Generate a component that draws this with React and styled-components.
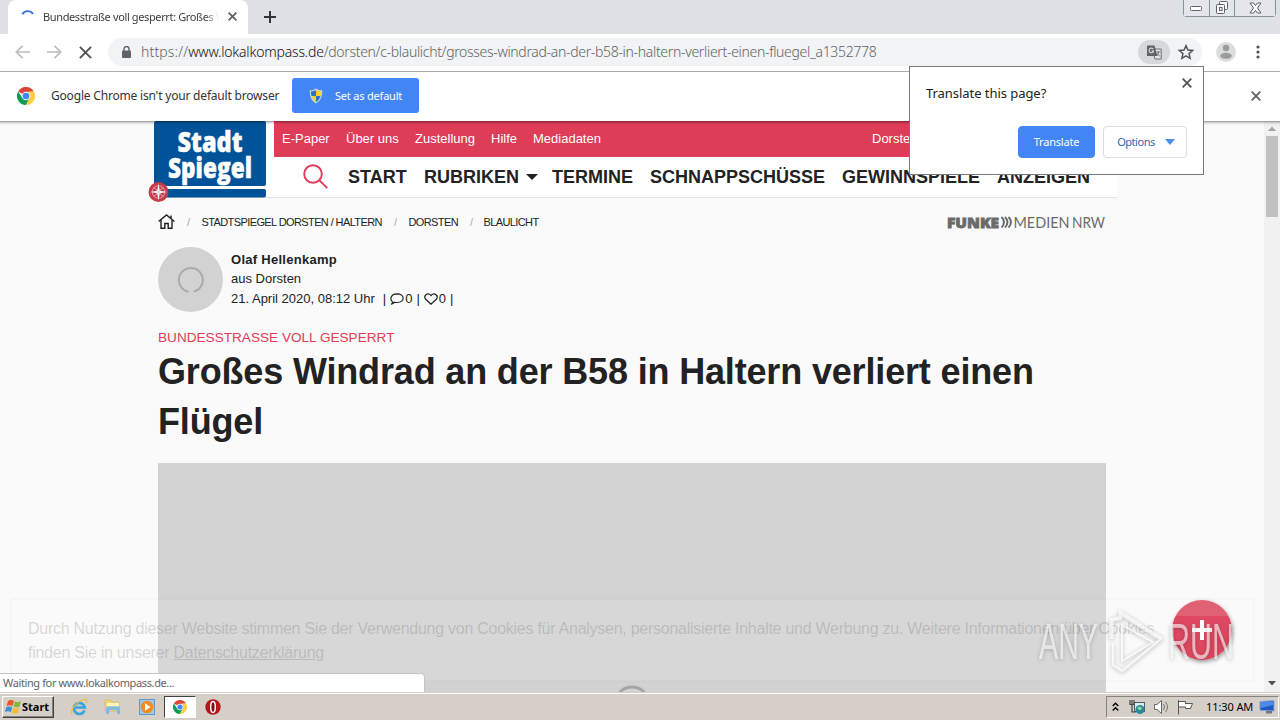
//React Imports
import React from 'react';

//library/framework imports
import styled, { createGlobalStyle } from 'styled-components';

const subLinks = [
  { text: 'E-Paper', width: 64 },
  { text: 'Über uns', width: 69 },
  { text: 'Zustellung', width: 76 },
  { text: 'Hilfe', width: 42 },
  { text: 'Mediadaten', width: 339 },
  { text: 'Dorsten', width: 60 },
];

const mainLinks = [
  { text: 'START', width: 76 },
  { text: 'RUBRIKEN', width: 128, caret: true },
  { text: 'TERMINE', width: 98 },
  { text: 'SCHNAPPSCHÜSSE', width: 192 },
  { text: 'GEWINNSPIELE', width: 155 },
  { text: 'ANZEIGEN', width: 100 },
];

const CloseIcon = ({ size = 10, color = '#5f6368', stroke = 1.8 }) => (
  <svg width={size} height={size} viewBox="0 0 10 10" stroke={color} strokeWidth={stroke} fill="none">
    <path d="M.7.7l8.6 8.6M9.3.7L.7 9.3" />
  </svg>
);

const ChromeIcon = ({ size = 18 }) => (
  <svg width={size} height={size} viewBox="0 0 18 18">
    <path d="M9 9L1.2 4.5A9 9 0 0 1 16.8 4.5L9 5z" fill="#db4437" />
    <path d="M1.2 4.5A9 9 0 0 0 9 18l3.6-6.9L9 9 5.4 11z" fill="#0f9d58" />
    <path d="M16.8 4.5A9 9 0 0 1 9 18l3.6-7L9 5z" fill="#ffcd40" />
    <circle cx="9" cy="9" r="4.2" fill="#f5f5f5" />
    <circle cx="9" cy="9" r="3.3" fill="#4285f4" />
  </svg>
);

const ShieldIcon = () => (
  <svg width="14" height="16" viewBox="0 0 14 16">
    <path d="M7 .5c2 1.4 4 1.8 6.3 1.8 0 6-1.3 10.5-6.3 13.2C2 12.8.7 8.3.7 2.3 3 2.3 5 1.9 7 .5z" fill="#c9d4dc" />
    <path d="M7 2C5.5 3 4 3.4 2 3.5c0 1.5.1 3 .5 4.5H7z" fill="#2f6fc4" />
    <path d="M7 2c1.5 1 3 1.4 5 1.5 0 1.5-.1 3-.5 4.5H7z" fill="#f7d02c" />
    <path d="M2.5 8c.7 2.6 2.2 4.7 4.5 6V8z" fill="#f7d02c" />
    <path d="M11.5 8c-.7 2.6-2.2 4.7-4.5 6V8z" fill="#2f6fc4" />
  </svg>
);

const TabStrip = () => (
  <Strip>
    <Tab>
      <svg width="14" height="14" viewBox="0 0 14 14" fill="none">
        <path d="M1.3 4.2A6.3 6.3 0 0 1 12 4" stroke="#3b6fe0" strokeWidth="1.9" />
      </svg>
      <TabTitle>Bundesstraße voll gesperrt: Großes W</TabTitle>
      <CloseIcon size={9} stroke={2} />
    </Tab>
    <NewTab>
      <svg width="12" height="12" viewBox="0 0 12 12" stroke="#303338" strokeWidth="2">
        <path d="M6 0v12M0 6h12" />
      </svg>
    </NewTab>
    <WindowButtons>
      <WindowButton $width={25}>
        <svg width="13" height="6" viewBox="0 0 13 6">
          <rect x=".5" y="1.5" width="11" height="4" rx="1" fill="#fff" stroke="#5d626b" />
        </svg>
      </WindowButton>
      <WindowButton $width={25}>
        <svg width="14" height="14" viewBox="0 0 14 14" fill="#f7f8fa" stroke="#5d626b">
          <rect x="4.5" y=".5" width="8" height="8" rx="1" />
          <rect x="1.5" y="3.5" width="8" height="9" rx="1" />
          <rect x="4.5" y="6.5" width="2.5" height="3" />
        </svg>
      </WindowButton>
      <WindowButton $width={41}>
        <svg width="13" height="12" viewBox="0 0 13 12" fill="#fff" stroke="#5d626b">
          <path d="M1 1h3.5l2 2.5 2-2.5H12L8.5 6l3.5 5H8.5l-2-2.5-2 2.5H1l3.5-5z" />
        </svg>
      </WindowButton>
    </WindowButtons>
  </Strip>
);

const Toolbar = () => (
  <Bar>
    <NavButtons>
      <svg width="15" height="14" viewBox="0 0 15 14" fill="none" stroke="#babcbe" strokeWidth="1.7">
        <path d="M15 7H1.5M7.5 .8L1.3 7l6.2 6.2" />
      </svg>
      <svg width="15" height="14" viewBox="0 0 15 14" fill="none" stroke="#babcbe" strokeWidth="1.7">
        <path d="M0 7h13.5M7.5 .8L13.7 7l-6.2 6.2" />
      </svg>
      <CloseIcon size={13} stroke={1.5} color="#505357" />
    </NavButtons>
    <Omnibox>
      <svg width="9" height="12" viewBox="0 0 9 12">
        <path d="M2 5V3a2.5 2.5 0 0 1 5 0v2" fill="none" stroke="#5f6368" strokeWidth="1.4" />
        <rect y="4.5" width="9" height="7.5" rx="1" fill="#5f6368" />
      </svg>
      <Url>
        <Scheme>https://</Scheme>
        <Host>www.lokalkompass.de</Host>
        /dorsten/c-blaulicht/grosses-windrad-an-der-b58-in-haltern-verliert-einen-fluegel_a1352778
      </Url>
      <TranslateChip>
        <svg width="15" height="15" viewBox="0 0 15 15">
          <path d="M5.5 4h8.700v10H8z" fill="#e6e6e6" stroke="#6b6e72" />
          <path d="M0 .5h7.5L10.5 11H0z" fill="#5f6368" />
          <path d="M6.3 4.2A2.3 2.3 0 1 0 6.6 6H4.5" fill="none" stroke="#ddd" strokeWidth="1.1" />
          <path d="M9.5 7h4M11.5 6v1c0 1.5-1 3-2 4M10.5 8.5l2.5 3" fill="none" stroke="#6b6e72" strokeWidth=".9" />
        </svg>
      </TranslateChip>
      <svg width="16" height="16" viewBox="0 0 24 24" fill="none" stroke="#505357" strokeWidth="2.2">
        <path d="M12 2.5l2.9 6.5 7.1.7-5.4 4.7 1.6 7L12 17.7l-6.2 3.7 1.6-7L2 9.7 9.1 9z" />
      </svg>
    </Omnibox>
    <Avatar>
      <svg width="20" height="20" viewBox="0 0 20 20">
        <circle cx="10" cy="10" r="10" fill="#dcdddd" />
        <circle cx="10" cy="6" r="3.2" fill="#999b9d" />
        <ellipse cx="10" cy="13.8" rx="5.8" ry="3" fill="#999b9d" />
      </svg>
    </Avatar>
    <svg width="4" height="14" viewBox="0 0 4 14" fill="#505357">
      <circle cx="2" cy="2" r="1.6" />
      <circle cx="2" cy="7" r="1.6" />
      <circle cx="2" cy="12" r="1.6" />
    </svg>
  </Bar>
);

const InfoBar = () => (
  <Info>
    <ChromeIcon />
    <InfoText>Google Chrome isn't your default browser</InfoText>
    <DefaultButton>
      <ShieldIcon />
      <span>Set as default</span>
    </DefaultButton>
    <InfoClose>
      <CloseIcon size={10} />
    </InfoClose>
  </Info>
);

const TranslatePopup = () => (
  <Popup>
    <PopupHead>
      <PopupTitle>Translate this page?</PopupTitle>
      <CloseIcon size={10} color="#505357" />
    </PopupHead>
    <PopupActions>
      <PopupButton $primary>Translate</PopupButton>
      <PopupButton>
        Options
        <svg width="10" height="6" viewBox="0 0 10 6">
          <path d="M0 0h10L5 6z" fill="#4a90e2" />
        </svg>
      </PopupButton>
    </PopupActions>
  </Popup>
);

const Logo = () => (
  <LogoSvg width="122" height="84" viewBox="0 0 122 84">
    <rect x="9" y="0" width="112" height="65" rx="2" fill="#005299" />
    <rect x="9" y="68" width="112" height="8.5" rx="2" fill="#005299" />
    <g fill="#fff" stroke="#fff" strokeWidth=".5" fontFamily="'Open Sans', sans-serif" fontWeight="800" fontSize="29">
      <text x="32.5" y="31" textLength="65" lengthAdjust="spacingAndGlyphs">Stadt</text>
      <text x="23" y="56.5" textLength="84" lengthAdjust="spacingAndGlyphs">Spiegel</text>
    </g>
    <circle cx="13.5" cy="71" r="10" fill="#c33b4b" />
    <circle cx="13.5" cy="71" r="6.3" fill="none" stroke="#e39aa3" />
    <path d="M13.5 62.5l1.3 7.2 7.2 1.3-7.2 1.3-1.3 7.2-1.3-7.2L5 71l7.2-1.3z" fill="#fff" />
    <path d="M9 66.5l9 9M18 66.5l-9 9" stroke="#f0c0c5" />
  </LogoSvg>
);

const SiteHeader = () => (
  <Header>
    <Logo />
    <HeaderMain>
      <SubNav>
        {subLinks.map(link => (
          <NavItem key={link.text} $width={link.width}>{link.text}</NavItem>
        ))}
      </SubNav>
      <MainNav>
        <SearchIcon width="25" height="25" viewBox="0 0 25 25" fill="none" stroke="#df3c57" strokeWidth="1.9">
          <circle cx="10" cy="10" r="8.8" />
          <path d="M16.3 16.3l8 7.800" />
        </SearchIcon>
        {mainLinks.map(link => (
          <NavItem key={link.text} $width={link.width}>
            {link.text}
            {link.caret && <Caret />}
          </NavItem>
        ))}
      </MainNav>
    </HeaderMain>
  </Header>
);

const Breadcrumbs = () => (
  <Crumbs>
    <svg width="17" height="15" viewBox="0 0 17 15" fill="none" stroke="#222" strokeWidth="1.4">
      <path d="M.6 7.5L8.5 1l7.9 6.5M3 6v8.2h3.8V9.5h3.4v4.700H14V6M13 4.5V1.5" />
    </svg>
    <Slash $left={12} $right={12}>/</Slash>
    <span>STADTSPIEGEL DORSTEN / HALTERN</span>
    <Slash $left={12} $right={12}>/</Slash>
    <span>DORSTEN</span>
    <Slash $left={12} $right={11}>/</Slash>
    <span>BLAULICHT</span>
    <Publisher width="160" height="16" viewBox="0 0 160 16" fill="#6a6a6a">
      <text x="1" y="13.5" fontFamily="'Open Sans', sans-serif" fontWeight="800" fontSize="14" stroke="#6a6a6a" strokeWidth=".8" textLength="52" lengthAdjust="spacingAndGlyphs">FUNKE</text>
      <path d="M55.5 3q5 5 0 10.5M59 3q5 5 0 10.5M62.5 3q5 5 0 10.5" fill="none" stroke="#6a6a6a" strokeWidth="1.9" />
      <text x="67.5" y="13.5" fontFamily="Lato, sans-serif" fontSize="14.5" textLength="56" lengthAdjust="spacingAndGlyphs">MEDIEN</text>
      <text x="126" y="13.5" fontFamily="Lato, sans-serif" fontSize="14.5" textLength="33" lengthAdjust="spacingAndGlyphs">NRW</text>
    </Publisher>
  </Crumbs>
);

const Author = () => (
  <AuthorRow>
    <AuthorImage>
      <svg width="28" height="28" viewBox="0 0 28 28" fill="none">
        <path d="M11.5 25.700A12 12 0 1 1 17 25.5" stroke="#aaa" strokeWidth="2" />
      </svg>
    </AuthorImage>
    <AuthorText>
      <AuthorName>Olaf Hellenkamp</AuthorName>
      <div>aus Dorsten</div>
      <Meta>
        <span>21. April 2020, 08:12 Uhr</span>
        <Divider $left={8}>|</Divider>
        <svg width="14" height="12" viewBox="0 0 14 12" fill="none" stroke="#222" strokeWidth="1.2">
          <path d="M3 9.3C-.5 7 .2 1 7 .8c8 0 8.5 8.7 0 8.7-.9 0-1.7-.1-2.3-.3-.9 1-2 1.7-3.700 2C2.3 10.5 2.8 10 3 9.3z" />
        </svg>
        <Count>0</Count>
        <Divider $left={4}>|</Divider>
        <svg width="14" height="12" viewBox="0 0 14 12" fill="none" stroke="#222" strokeWidth="1.2">
          <path d="M7 11.2L1.7 6.3C-1 3 3.5-1.3 7 2.5c3.5-3.800 8 .5 5.3 3.8z" />
        </svg>
        <Count>0</Count>
        <Divider $left={4}>|</Divider>
      </Meta>
    </AuthorText>
  </AuthorRow>
);

const Watermark = () => (
  <WatermarkSvg width="206" height="70" viewBox="0 0 206 70">
    <g fill="none" stroke="#fff" opacity=".75">
      <path d="M79.5 32V13l9-2V6l41 26" strokeWidth="4" />
      <path d="M130 31L90 64l-9-6V36" strokeWidth="2.5" />
      <path d="M90 18v36l31-19z" strokeWidth="2" />
    </g>
    <g fill="#fff" opacity=".62" fontFamily="'Liberation Sans Narrow', 'Liberation Sans', sans-serif" fontSize="50">
      <text x="7" y="52" textLength="59" lengthAdjust="spacingAndGlyphs">ANY</text>
      <text x="136" y="52" textLength="66" lengthAdjust="spacingAndGlyphs">RUN</text>
    </g>
  </WatermarkSvg>
);

const Taskbar = () => (
  <Task>
    <StartButton>
      <svg width="17" height="16" viewBox="0 0 17 16">
        <path d="M3 2q3-2 6 0L7.5 7q-3-1.5-6 0z" fill="#e8582a" />
        <path d="M10 2.5q3 1.5 6-.5l-1.5 5.5q-3 1.5-6 0z" fill="#7fb83a" />
        <path d="M1.2 8.2q3-1.5 6 0L6 13q-3-1.5-6 0z" fill="#3b8ed8" />
        <path d="M8.2 8.700q3 1.5 6 0L13 14q-3 1.5-6.2-.3z" fill="#f5bd2e" />
      </svg>
      Start
    </StartButton>
    <Launchers>
      <Launcher>
        <svg width="18" height="18" viewBox="0 0 18 18" fill="none">
          <path d="M14.5 12.5A5.5 5.5 0 1 1 14.8 9.5H5" stroke="#3ba3e0" strokeWidth="2.7" />
          <path d="M2.5 16C-1 13 8 1.5 15.5 1.3c2 .3 1.5 2.2.7 3.5" stroke="#e9bd40" strokeWidth="1.3" />
        </svg>
      </Launcher>
      <Launcher>
        <svg width="18" height="16" viewBox="0 0 18 16">
          <path d="M1 1h6l1 2h7v9H1z" fill="#f0d77a" stroke="#d0b350" strokeWidth=".6" />
          <path d="M3 4h12v3H3z" fill="#fff3c0" />
          <path d="M2 15V9q0-1.5 1.5-1.5h11Q16 7.5 16 9v6h-3v-4H5v4z" fill="#7dbde4" />
        </svg>
      </Launcher>
      <Launcher>
        <svg width="16" height="16" viewBox="0 0 16 16">
          <rect x=".5" y=".5" width="15" height="15" fill="#9cc9ee" stroke="#5e99d3" />
          <circle cx="8" cy="8" r="6.3" fill="#f28c1e" />
          <path d="M6 4.2L11.5 8 6 11.8z" fill="#fff" />
        </svg>
      </Launcher>
      <Launcher $active>
        <ChromeIcon size={14} />
      </Launcher>
      <Launcher>
        <svg width="16" height="16" viewBox="0 0 16 16">
          <circle cx="8" cy="8" r="7.7" fill="#b3161b" />
          <ellipse cx="8" cy="8" rx="2.3" ry="5.5" fill="#7d0a0e" stroke="#fff" strokeWidth="1.5" />
        </svg>
      </Launcher>
    </Launchers>
    <Tray>
      <svg width="7" height="10" viewBox="0 0 7 10" fill="none" stroke="#000" strokeWidth="1.4">
        <path d="M.7 4L3.5 1.2 6.3 4M.7 8.5l2.8-2.800 2.8 2.8" />
      </svg>
      <TrayIcon $left={10}>
        <svg width="17" height="16" viewBox="0 0 17 16">
          <rect x="5.5" y="3.5" width="10" height="9" fill="#d9edf5" stroke="#4d5c63" />
          <path d="M1 1v4.5h4V1M3 5v8h4M3 1v4" fill="none" stroke="#444" strokeWidth="1.2" />
          <circle cx="11" cy="10.5" r="4.5" fill="#27899c" />
          <path d="M8 9q3-3 5 0-1 3-3 2z" fill="#8fd3a2" />
        </svg>
      </TrayIcon>
      <TrayIcon $left={7}>
        <svg width="18" height="16" viewBox="0 0 18 16" fill="none" stroke="#666">
          <path d="M1.5 5.5H4L8.5 1.5v13L4 10.5H1.5z" fill="#fff" />
          <path d="M10.5 5q2 3 0 6M12.5 3q4 5 0 10" strokeWidth=".9" />
        </svg>
      </TrayIcon>
      <TrayIcon $left={6}>
        <svg width="17" height="16" viewBox="0 0 17 16" fill="#fff" stroke="#555">
          <path d="M1.5 1v14.5M1.5 2.5h7v2h7l-2 5h-5v-1.5h-7z" />
        </svg>
      </TrayIcon>
      <Clock>11:30 AM</Clock>
      <svg width="16" height="14" viewBox="0 0 16 14">
        <path d="M1 1.5L15 .5v10.500l-14-.5z" fill="#1f58c0" stroke="#8fa9cf" />
        <path d="M2 2l12-.7V5L2 8z" fill="#4e8be6" />
        <path d="M7 11h6v2.5H7z" fill="#6d7888" />
      </svg>
    </Tray>
  </Task>
);

const App = () => (
  <Desktop>
    <GlobalStyle />
    <TabStrip />
    <Toolbar />
    <InfoBar />
    <Viewport>
      <Page>
        <SiteHeader />
        <Breadcrumbs />
        <Author />
        <Kicker>BUNDESSTRASSE VOLL GESPERRT</Kicker>
        <Title>Großes Windrad an der B58 in Haltern verliert einen Flügel</Title>
        <Hero>
          <svg width="40" height="40" viewBox="0 0 40 40" fill="none">
            <circle cx="20" cy="20" r="17" stroke="#a6a6a6" strokeWidth="3" />
          </svg>
        </Hero>
      </Page>
      <Scrollbar>
        <ScrollArrow width="16" height="15" viewBox="0 0 16 15">
          <path d="M4 10l4-4.5 4 4.5z" fill="#a3a3a3" />
        </ScrollArrow>
        <Thumb />
        <ScrollArrow width="16" height="17" viewBox="0 0 16 17">
          <path d="M4 6l4 4.5L12 6z" fill="#505050" />
        </ScrollArrow>
      </Scrollbar>
      <TopShadow />
      <FloatingButton>
        <svg width="22" height="22" viewBox="0 0 22 22" stroke="#fff" strokeWidth="4">
          <path d="M11 1v20M1 11h20" />
        </svg>
      </FloatingButton>
      <CookieBanner>
        Durch Nutzung dieser Website stimmen Sie der Verwendung von Cookies für Analysen, personalisierte Inhalte und Werbung zu. Weitere Informationen über Cookies
        <br />
        finden Sie in unserer <u>Datenschutzerklärung</u>
      </CookieBanner>
      <Watermark />
      <StatusBubble>Waiting for www.lokalkompass.de...</StatusBubble>
    </Viewport>
    <Taskbar />
    <TranslatePopup />
  </Desktop>
);

const GlobalStyle = createGlobalStyle`
  * {
    box-sizing: border-box;
  }

  body {
    margin: 0;
    overflow: hidden;
  }

  svg {
    display: block;
    flex: none;
  }
`;

const Desktop = styled.div`
  position: relative;
  display: flex;
  flex-direction: column;
  width: 1280px;
  height: 720px;
  overflow: hidden;
  background: #fff;
  color: #222;
  font-family: 'Noto Sans', sans-serif;
  font-size: 11px;
  white-space: nowrap;
`;

const Strip = styled.div`
  display: flex;
  height: 34px;
  background: #dee1e6;
`;

const Tab = styled.div`
  display: flex;
  align-items: center;
  width: 240px;
  margin-left: 8px;
  padding: 0 11px 1px 13px;
  border-radius: 8px 8px 0 0;
  background: #fff;
`;

const TabTitle = styled.div`
  width: 176px;
  margin: 0 9px 0 8px;
  overflow: hidden;
  letter-spacing: -0.37px;
  color: #3c4043;
  -webkit-mask-image: linear-gradient(90deg, #000 162px, transparent 176px);
`;

const NewTab = styled.div`
  display: flex;
  align-items: center;
  margin-left: 16px;
`;

const WindowButtons = styled.div`
  display: flex;
  height: 17px;
  margin: 0 4px 0 auto;
  border: 1px solid #8b9099;
  border-top: 0;
  border-radius: 0 0 4px 4px;
`;

const WindowButton = styled.div`
  display: flex;
  align-items: center;
  justify-content: center;
  width: ${props => props.$width}px;
  background: #e3e6eb;

  & + & {
    border-left: 1px solid #8b9099;
  }
`;

const Bar = styled.div`
  display: flex;
  align-items: center;
  height: 38px;
  padding: 0 20px 1px 15px;
  border-bottom: 1px solid #a9abae;
`;

const NavButtons = styled.div`
  display: flex;
  align-items: center;
  gap: 17px;
  width: 93px;
`;

const Omnibox = styled.div`
  display: flex;
  align-items: center;
  width: 1094px;
  height: 28px;
  padding: 0 8px 0 14px;
  border-radius: 14px;
  background: #f1f3f4;
`;

const Url = styled.div`
  flex: 1;
  margin-left: 10px;
  padding-bottom: 1px;
  color: #5f6368;
  font-size: 14px;
  font-weight: 300;
  letter-spacing: -0.32px;
`;

const Scheme = styled.span`
  letter-spacing: 0.15px;
`;

const Host = styled.span`
  color: #111;
  letter-spacing: -0.19px;
`;

const TranslateChip = styled.div`
  display: flex;
  align-items: center;
  justify-content: center;
  width: 32px;
  height: 24px;
  margin-right: 8px;
  border-radius: 12px;
  background: #d6d8d9;
`;

const Avatar = styled.div`
  margin: 0 auto 0 14px;
`;

const Info = styled.div`
  display: flex;
  align-items: center;
  height: 49px;
  padding: 0 19px 2px 17px;
`;

const InfoText = styled.div`
  width: 241px;
  margin-left: 16px;
  color: #333;
  font-size: 12px;
  letter-spacing: -0.19px;
`;

const DefaultButton = styled.div`
  display: flex;
  align-items: center;
  gap: 12px;
  width: 127px;
  height: 35px;
  padding-left: 17px;
  border-radius: 3px;
  background: #4285f4;
  color: #fff;
  letter-spacing: -0.2px;
`;

const InfoClose = styled.div`
  margin-left: auto;
`;

/* the popup hangs from the address bar, over the info bar and the page */
const Popup = styled.div`
  position: absolute;
  top: 66px;
  left: 909px;
  width: 295px;
  height: 109px;
  padding: 11px 16px 0;
  border: 1px solid #77797c;
  background: #fff;
`;

const PopupHead = styled.div`
  display: flex;
  justify-content: space-between;
  height: 48px;
  margin-right: -5px;
`;

const PopupTitle = styled.div`
  padding-top: 6px;
  color: #222;
  font-size: 13px;
  line-height: 18px;
  letter-spacing: -0.05px;
`;

const PopupActions = styled.div`
  display: flex;
  justify-content: flex-end;
  gap: 8px;
`;

const PopupButton = styled.div`
  display: flex;
  align-items: center;
  justify-content: center;
  gap: 10px;
  width: ${props => (props.$primary ? 77 : 84)}px;
  height: 32px;
  padding: 0 0 1px ${props => (props.$primary ? 0 : 2)}px;
  border: 1px solid ${props => (props.$primary ? '#4285f4' : '#dadce0')};
  border-radius: 4px;
  background: ${props => (props.$primary ? '#4285f4' : '#fff')};
  color: ${props => (props.$primary ? '#fff' : '#2a67b8')};
  letter-spacing: ${props => (props.$primary ? -0.2 : -0.45)}px;
`;

const Viewport = styled.div`
  position: relative;
  display: flex;
  height: 571px;
  overflow: hidden;
  background: #fafafa;
  font-family: 'Liberation Sans', sans-serif;
`;

const Page = styled.div`
  width: 1264px;
  padding-left: 158px;
`;

const Header = styled.div`
  display: flex;
  width: 959px;
  height: 77px;
  border-bottom: 1px solid #e4e4e4;
  background: #fff;
`;

const LogoSvg = styled.svg`
  position: relative;
  left: -13px;
  margin-right: -6px;
`;

const HeaderMain = styled.div`
  flex: 1;
`;

const SubNav = styled.div`
  display: flex;
  align-items: center;
  width: 832px;
  height: 36px;
  padding: 0 0 2px 8px;
  background: #df3c57;
  color: #fff;
  font-size: 13px;
`;

const MainNav = styled.div`
  display: flex;
  align-items: center;
  height: 40px;
  padding-left: 29px;
  font-size: 18px;
  font-weight: bold;
`;

const NavItem = styled.div`
  display: flex;
  align-items: center;
  gap: 7px;
  flex: none;
  width: ${props => props.$width}px;
`;

const SearchIcon = styled.svg`
  margin: 0 20px 1px 0;
`;

const Caret = styled.span`
  border: 6px solid transparent;
  border-top-color: #222;
  border-bottom: 0;
`;

const Crumbs = styled.div`
  display: flex;
  align-items: center;
  width: 948px;
  height: 49px;
  padding-bottom: 2px;
  font-size: 11px;
  letter-spacing: -0.6px;
`;

const Slash = styled.span`
  margin: 0 ${props => props.$right}px 0 ${props => props.$left}px;
  color: #aaa;
`;

const Publisher = styled.svg`
  margin-left: auto;
  letter-spacing: 0;
`;

const AuthorRow = styled.div`
  display: flex;
  height: 65px;
`;

const AuthorImage = styled.div`
  display: flex;
  align-items: center;
  justify-content: center;
  width: 65px;
  height: 65px;
  border-radius: 50%;
  background: #d2d2d2;
`;

const AuthorText = styled.div`
  margin: 3px 0 0 8px;
  font-size: 13px;
  line-height: 19.4px;
`;

const AuthorName = styled.div`
  font-weight: bold;
  letter-spacing: 0.28px;
`;

const Meta = styled.div`
  display: flex;
  align-items: center;
`;

const Divider = styled.span`
  margin: 0 4px 0 ${props => props.$left}px;
`;

const Count = styled.span`
  margin-left: 1px;
`;

const Kicker = styled.div`
  height: 19px;
  margin-top: 16px;
  color: #df3c57;
  font-size: 13.6px;
  line-height: 20px;
`;

const Title = styled.h1`
  width: 948px;
  height: 100px;
  margin: 0 0 16px;
  font-size: 36px;
  font-weight: bold;
  line-height: 50px;
  letter-spacing: -0.16px;
  white-space: normal;
`;

const Hero = styled.div`
  display: flex;
  justify-content: center;
  width: 948px;
  height: 460px;
  padding-top: 221px;
  background: #d2d2d2;
`;

const Scrollbar = styled.div`
  display: flex;
  flex-direction: column;
  width: 16px;
  background: #f1f1f1;
`;

const ScrollArrow = styled.svg`
  &:last-child {
    margin-top: auto;
  }
`;

const Thumb = styled.div`
  width: 12px;
  height: 81px;
  margin: 0 2px;
  background: #c1c1c1;
`;

const TopShadow = styled.div`
  position: absolute;
  top: 0;
  left: 0;
  width: 100%;
  height: 4px;
  background: linear-gradient(rgba(0, 0, 0, 0.4), rgba(0, 0, 0, 0.1) 50%, transparent);
`;

const FloatingButton = styled.div`
  position: absolute;
  top: 479px;
  left: 1172px;
  display: flex;
  align-items: center;
  justify-content: center;
  width: 60px;
  height: 60px;
  border-radius: 50%;
  background: linear-gradient(#dd4a60 16px, #d92f4a 16px);
  box-shadow: 1px 2px 4px rgba(0, 0, 0, 0.4);
`;

const CookieBanner = styled.div`
  position: absolute;
  top: 478px;
  left: 11px;
  width: 1243px;
  height: 82px;
  padding: 17px 16px;
  border: 1px solid rgba(0, 0, 0, 0.02);
  background: rgba(255, 255, 255, 0.13);
  box-shadow: 0 0 3px rgba(0, 0, 0, 0.04);
  color: rgba(80, 80, 80, 0.22);
  font-size: 16px;
  line-height: 24px;
  letter-spacing: -0.26px;
`;

const WatermarkSvg = styled.svg`
  position: absolute;
  top: 486px;
  left: 1032px;
  filter: drop-shadow(0 1px 2px rgba(0, 0, 0, 0.35));
`;

const StatusBubble = styled.div`
  position: absolute;
  bottom: 0;
  left: 0;
  width: 425px;
  height: 19px;
  padding-left: 3px;
  border: 1px solid #c4c4c4;
  border-width: 1px 1px 0 0;
  border-radius: 0 4px 0 0;
  background: #fff;
  color: #5f6368;
  font-family: 'Noto Sans', sans-serif;
  line-height: 18px;
  letter-spacing: -0.38px;
`;

const Task = styled.div`
  display: flex;
  align-items: center;
  height: 28px;
  border-top: 1px solid #d4d0c8;
  box-shadow: inset 0 1px #fff;
  background: #d6cfc7;
`;

const StartButton = styled.div`
  display: flex;
  align-items: center;
  width: 52px;
  height: 22px;
  margin-left: 2px;
  padding-left: 2px;
  border: 1px solid;
  border-color: #fff #404040 #404040 #fff;
  box-shadow: inset -1px -1px #87837c;
  color: #000;
  font-weight: bold;
`;

const Launchers = styled.div`
  display: flex;
  align-items: center;
  margin-left: 8px;
`;

const Launcher = styled.div`
  display: flex;
  align-items: center;
  justify-content: center;
  width: ${props => (props.$active ? 32 : 34)}px;
  height: 22px;
  border: 1px solid;
  border-color: ${props => (props.$active ? '#404040 #fff #fff #404040' : 'transparent')};
  background: ${props => (props.$active ? '#fff' : 'none')};
`;

const Tray = styled.div`
  display: flex;
  align-items: center;
  width: 173px;
  height: 22px;
  margin: 0 1px 0 auto;
  padding-left: 5px;
  border: 1px solid;
  border-color: #87837c #fff #fff #87837c;
  color: #000;
`;

const TrayIcon = styled.div`
  margin-left: ${props => props.$left}px;
`;

const Clock = styled.div`
  width: 47px;
  margin: 0 6px 0 12px;
  letter-spacing: -0.1px;
`;

export default App;
